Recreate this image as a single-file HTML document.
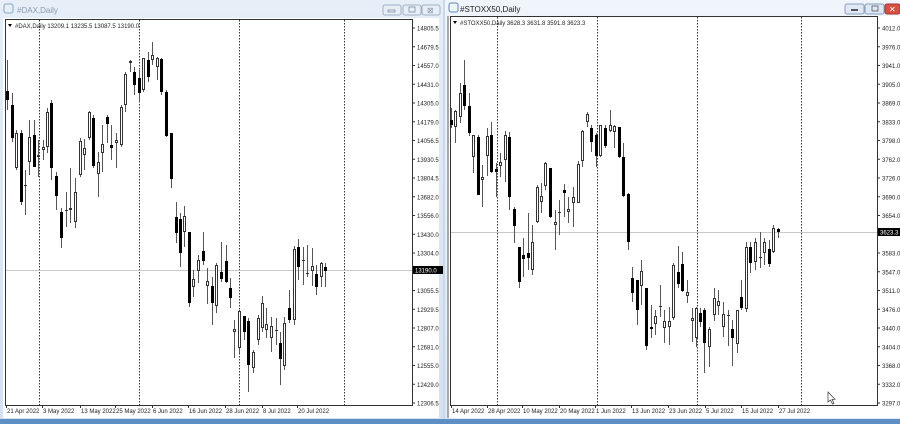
<!DOCTYPE html>
<html><head><meta charset="utf-8">
<style>
html,body{margin:0;padding:0;width:900px;height:424px;overflow:hidden;background:#fff;font-family:"Liberation Sans",sans-serif}
</style></head><body>
<svg id="s" width="900" height="424" xmlns="http://www.w3.org/2000/svg" style="position:absolute;left:0;top:0">
<defs>
<linearGradient id="tb" x1="0" y1="0" x2="0" y2="1"><stop offset="0" stop-color="#e6eef8"/><stop offset="1" stop-color="#d3e1f1"/></linearGradient>
<linearGradient id="tb2" x1="0" y1="0" x2="0" y2="1"><stop offset="0" stop-color="#f0f5fb"/><stop offset="1" stop-color="#dbe7f4"/></linearGradient>
</defs>
<rect x="0" y="0" width="900" height="424" fill="#c9d9ec"/>
<rect x="0" y="0" width="443" height="420" fill="url(#tb)"/>
<rect x="3" y="18" width="436" height="400" fill="#fff"/>
<text x="17" y="13" font-size="8" fill="#8a9bb0">#DAX,Daily</text>
<rect x="4" y="4" width="9" height="9" rx="2" fill="none" stroke="#8aa6c8"/>
<rect x="383" y="5" width="18" height="10" rx="2" fill="#e8eef6" stroke="#9fb0c6"/>
<rect x="403" y="5" width="18" height="10" rx="2" fill="#e8eef6" stroke="#9fb0c6"/>
<rect x="422" y="5" width="18" height="10" rx="2" fill="#e8eef6" stroke="#9fb0c6"/>
<rect x="388" y="10" width="7" height="2" fill="none" stroke="#7d8fa8" stroke-width="0.8"/>
<rect x="409" y="7" width="6" height="5" fill="none" stroke="#7d8fa8" stroke-width="0.8"/>
<text x="427" y="13" font-size="8" fill="#8a9bb0">⊠</text>
<rect x="445" y="0" width="455" height="420" fill="url(#tb2)"/>
<rect x="447" y="16" width="453" height="402" fill="#fff"/>
<rect x="447" y="16" width="2" height="402" fill="#a8a8a8"/>
<text x="460" y="12" font-size="8" fill="#222">#STOXX50,Daily</text>
<rect x="449" y="3" width="9" height="9" rx="2" fill="none" stroke="#5c86b8"/>
<rect x="845" y="4" width="19" height="10" rx="2" fill="#dfe8f3" stroke="#8aa0bc"/>
<rect x="865" y="4" width="19" height="10" rx="2" fill="#dfe8f3" stroke="#8aa0bc"/>
<rect x="885" y="4" width="15" height="10" rx="2" fill="#d9503f" stroke="#a33"/>
<rect x="851" y="9" width="7" height="2" fill="#556"/>
<rect x="872" y="6" width="6" height="5" fill="none" stroke="#556" stroke-width="0.8"/>
<text x="889" y="12" font-size="8" fill="#fff">✕</text>
<rect x="0" y="419" width="900" height="5" fill="#5e8fc4"/>
<g id="g"></g>
</svg>
<script>
var g=document.getElementById('g'),h='';
function R(x,y,w,hh,f,s){h+='<rect x="'+x+'" y="'+y+'" width="'+w+'" height="'+hh+'" fill="'+f+'"'+(s?' stroke="'+s+'" stroke-width="1"':'')+'/>';}
function L(x1,y1,x2,y2,c,d){h+='<line x1="'+x1+'" y1="'+y1+'" x2="'+x2+'" y2="'+y2+'" stroke="'+c+'" stroke-width="1"'+(d?' stroke-dasharray="1.5,1.5"':'')+'/>';}
function T(x,y,t,s,a,c){h+='<text x="'+x+'" y="'+y+'" font-size="'+s+'" fill="'+(c||'#222')+'"'+(a?' text-anchor="'+a+'"':'')+'>'+t+'</text>';}
function chart(x0,y0,x1,y1,vl,cur,curLbl,labels,ly0,lstep,dates,cs,title){
 R(x0+.5,y0+.5,x1-x0,y1-y0,'#fff','#333');
 vl.forEach(function(v){L(v+.5,y0+1,v+.5,y1,'#333',1);});
 L(x0+1,cur+.5,x1,cur+.5,'#c8c8c8');
 cs.forEach(function(c){var x=c[0],t=c[1],b=c[2],wt=c[3],wb=c[4],blk=c[5];
  L(x+.5,wt,x+.5,wb,'#555');
  if(b-t<1){L(x-1,t+.5,x+2,t+.5,'#333');}
  else if(blk){R(x-1,t,3,b-t,'#000');}
  else{R(x-.5,t+.5,2,b-t-1,'#fff','#333');}
 });
 labels.forEach(function(l,i){var y=ly0+i*lstep; if(l){L(x1,y,x1+3,y,'#333');T(x1+5,y+2.5,l,6);} });
 R(x1+1,cur-4,30,8,'#000');T(x1+3,cur+2.5,curLbl,6,null,'#fff');
 dates.forEach(function(d){L(d[0]+.5,y1,d[0]+.5,y1+3,'#333');T(d[0]+1,y1+8,d[1],6);});
 h+='<path d="M'+(x0+3)+' '+(y0+5)+' l4 0 l-2 3z" fill="#000"/>';
 T(x0+10,y0+9,title,6);
}
function C(a){return a.map(function(r){var x=r[0],o=r[1],c=r[2],wt=r[3],wb=r[4];return [x,Math.min(o,c),Math.max(o,c),wt,wb,r[5]];});}
var L1=C([[7,91,100,60,110,1],[12,105,138,93,142,1],[16,133,168,130,170,0],[21,133,202,130,205,1],[25,185,185,170,215,0],[29,137,162,120,175,0],[34,135,167,120,167,1],[38,155,157,140,177,0],[43,147,150,140,160,0],[47,112,147,108,153,0],[51,103,168,100,180,1],[56,176,196,172,210,1],[61,212,238,208,248,1],[66,210,210,192,227,0],[70,208,210,168,223,0],[75,192,222,178,228,0],[80,141,175,138,177,0],[84,148,155,139,170,0],[89,112,138,111,140,0],[93,118,166,115,168,1],[98,162,174,152,197,0],[102,144,153,125,172,0],[107,117,124,115,143,1],[111,145,148,125,160,1],[116,140,143,133,168,0],[121,107,145,105,147,0],[125,74,105,72,112,0],[130,61,63,60,72,0],[134,72,85,67,95,1],[139,78,93,70,102,1],[143,58,90,58,92,0],[148,60,77,52,82,1],[152,55,60,42,65,0],[157,58,67,57,80,0],[161,59,92,58,95,1],[166,92,136,90,137,1],[171,133,179,133,188,1],
[176,217,233,202,243,1],[180,219,253,213,267,1],[184,216,232,206,247,0],[189,232,303,232,307,1],[193,279,287,270,297,0],[198,260,271,255,283,0],[203,251,261,232,265,1],[207,281,286,268,304,0],[212,286,303,277,325,1],[216,265,306,263,313,0],[221,272,279,242,282,1],[226,261,282,245,283,1],[230,288,298,278,308,1],[234,329,332,320,358,0],[239,311,348,310,353,0],[244,316,332,316,340,1],[248,321,365,318,392,1],[253,352,368,350,373,0],[258,318,340,315,345,0],[262,303,328,296,332,0],[266,324,330,308,338,0],[271,326,338,317,352,0],[276,330,330,318,345,0],[280,343,359,332,385,1],[284,323,366,317,370,0],[289,308,320,290,323,1],[294,249,320,246,325,0],[298,247,267,239,280,1],[303,260,260,247,285,0],[307,273,273,245,277,0],[312,266,271,248,286,0],[316,274,287,265,295,1],[321,263,277,262,287,0],[325,267,271,263,287,1]]);
chart(5,19,412,405,[39,139,239,344],270,'13190.0',
['14805.5','14679.5','14557.0','14431.0','14305.0','14179.0','14056.5','13930.5','13804.5','13682.0','13556.0','13430.0','13304.0','','13055.5','12929.5','12807.0','12681.0','12555.0','12429.0','12306.5'],28,18.75,
[[6,'21 Apr 2022'],[42,'3 May 2022'],[80,'13 May 2022'],[115,'25 May 2022'],[152,'6 Jun 2022'],[188,'16 Jun 2022'],[225,'28 Jun 2022'],[262,'8 Jul 2022'],[297,'20 Jul 2022']],L1,'#DAX,Daily  13209.1 13235.5 13087.5 13190.0');
var L2=C([[451,120,125,108,128,1],[455,111,127,110,143,0],[460,93,117,83,123,0],[464,85,106,60,110,1],[469,106,133,93,136,1],[473,135,157,135,173,0],[478,137,195,135,195,1],[482,177,180,165,207,0],[487,136,156,128,176,0],[491,135,172,122,173,1],[496,169,172,163,197,1],[500,162,166,153,177,0],[505,135,160,131,182,0],[509,137,197,132,210,1],[514,209,226,207,243,1],[519,247,282,247,288,1],[523,255,259,238,277,1],[528,253,258,213,270,1],[532,242,270,225,275,0],[537,187,222,185,223,0],[541,196,202,183,213,0],[545,163,186,162,190,0],[550,168,217,168,218,1],[555,222,225,210,250,0],[559,212,212,200,235,0],[564,190,193,184,217,1],[568,209,212,197,223,0],[573,197,203,187,227,0],[578,164,203,161,203,0],[582,131,161,130,167,0],[587,114,122,112,127,0],[591,128,142,125,152,1],[596,135,156,133,167,1],[600,125,156,125,157,0],[605,128,146,125,148,1],[610,125,131,110,132,0],[614,126,132,125,148,0],[619,127,157,127,158,1],[623,157,196,143,197,1],[628,194,242,193,250,1],
[632,278,293,267,302,1],[637,280,310,280,325,1],[641,271,286,260,305,0],[646,288,346,288,350,1],[651,327,329,305,338,1],[655,316,324,310,335,0],[660,306,306,285,317,0],[664,321,328,310,343,0],[669,321,327,307,345,0],[673,265,318,263,320,0],[678,272,284,246,288,1],[682,264,291,252,292,1],[687,292,296,280,303,0],[692,318,321,308,342,0],[696,308,338,307,347,0],[700,313,322,308,327,1],[704,310,343,308,373,1],[709,329,347,327,367,0],[714,298,315,288,321,0],[718,301,306,290,315,0],[723,314,327,302,337,0],[728,315,315,310,346,0],[732,329,338,320,366,1],[737,310,344,310,353,0],[741,297,308,280,310,1],[746,247,309,242,312,0],[750,247,263,242,273,1],[755,242,262,238,270,0],[760,257,257,232,268,0],[764,242,253,238,265,0],[769,249,264,240,267,1],[773,228,252,225,253,0],[778,229,232,228,238,1]]);
chart(450,16,877,405,[497,597,697,801],232,'3623.3',
['4012.0','3976.0','3941.0','3905.0','3869.0','3833.0','3798.0','3762.0','3726.0','3690.0','3654.0','','3583.0','3547.0','3511.0','3476.0','3440.0','3404.0','3368.0','3332.0','3297.0'],28,18.75,
[[451,'14 Apr 2022'],[487,'28 Apr 2022'],[522,'10 May 2022'],[559,'20 May 2022'],[595,'1 Jun 2022'],[631,'13 Jun 2022'],[668,'23 Jun 2022'],[705,'5 Jul 2022'],[741,'15 Jul 2022'],[778,'27 Jul 2022']],L2,'#STOXX50,Daily  3628.3 3631.8 3591.8 3623.3');
h+='<path d="M828 392 l0 10 l2.5-2 l2 4 l1.5-.7 l-2-4 l3 0z" fill="#fff" stroke="#333" stroke-width="0.7"/>';
g.innerHTML=h;
</script>
</body></html>
